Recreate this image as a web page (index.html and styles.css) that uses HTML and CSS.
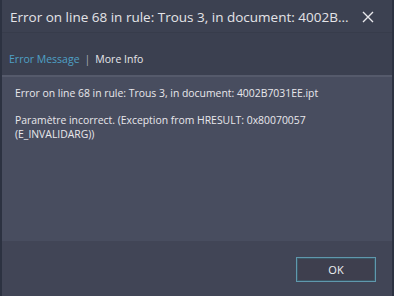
FILE: index.html
```html
<!DOCTYPE html>
<html>
<head>
<meta charset="utf-8">
<link rel="stylesheet" href="styles.css">
</head>
<body>
<div class="dialog">
  <div class="titlebar">
    <span class="title">Error on line 68 in rule: Trous 3, in document: 4002B...</span>
    <svg class="close" width="12" height="12" viewBox="0 0 12 12"><path d="M1 1L11 11M11 1L1 11" stroke="#e8e8ec" stroke-width="1.4" fill="none"/></svg>
  </div>
  <div class="tabs">
    <span class="tab active">Error Message</span>
    <span class="sep">|</span>
    <span class="tab">More Info</span>
  </div>
  <div class="content">
    <p class="line">Error on line 68 in rule: Trous 3, in document: 4002B7031EE.ipt</p>
    <p class="line">Paramètre incorrect. (Exception from HRESULT: 0x80070057<br>(E_INVALIDARG))</p>
  </div>
  <div class="footer">
    <button class="ok">OK</button>
  </div>
</div>
</body>
</html>
```
FILE: styles.css
```css
html, body {
  margin: 0;
  padding: 0;
  background: #3c4151;
}
.dialog {
  width: 394px;
  height: 296px;
  box-sizing: border-box;
  border-left: 2px solid #2c3241;
  border-right: 2px solid #2c3241;
  display: flex;
  flex-direction: column;
  font-family: "Open Sans", "Noto Sans", sans-serif;
  background: #3c4151;
}
.titlebar {
  height: 33px;
  display: flex;
  align-items: center;
  padding-left: 8px;
  padding-top: 1px;
  border-bottom: 1px solid #373c4b;
  box-sizing: border-box;
}
.title {
  flex: 1;
  color: #e4e4e8;
  font-size: 13.5px;
  white-space: nowrap;
}
.close {
  margin-right: 18px;
}
.tabs {
  height: 42px;
  box-sizing: border-box;
  padding-top: 10px;
  display: flex;
  align-items: center;
  padding-left: 7px;
  font-size: 10.5px;
  background: #3b4050;
}
.tab { color: #e6e6ea; }
.tab.active { color: #4fa0c6; }
.sep {
  color: #a8acb6;
  margin: 0 5px 0 5px;
}
.content {
  height: 166px;
  box-sizing: border-box;
  border-top: 2px solid #555a6b;
  background: #484d5f;
  padding: 9px 14px 0 13px;
  color: #e8e8ec;
  font-size: 10.4px;
}
.line {
  margin: 0 0 13px 0;
  line-height: 14px;
}
.footer {
  flex: 1;
  display: flex;
  justify-content: flex-end;
  align-items: flex-start;
  padding: 16px 16px 0 0;
  background: #414556;
}
.ok {
  width: 80px;
  height: 25px;
  box-sizing: border-box;
  border: 1px solid #5f98ad;
  box-shadow: inset 0 0 0 1px #3b5665;
  background: #3e3f4e;
  color: #eef0f4;
  font-family: "Open Sans", "Noto Sans", sans-serif;
  font-size: 11px;
  padding: 0;
}
```
